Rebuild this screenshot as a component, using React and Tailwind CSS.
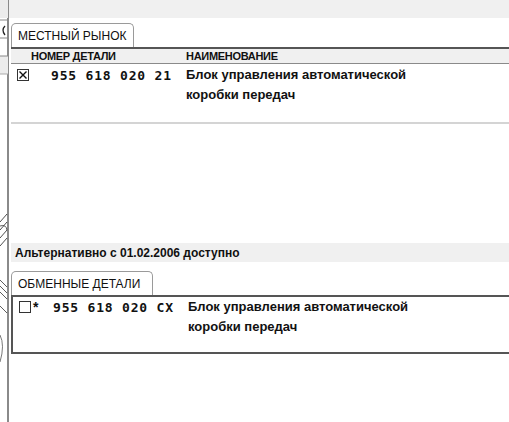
import React from 'react';

const font = { fontFamily: '"Liberation Sans", Arial, sans-serif' };

function Checkbox({ checked }) {
  return (
    <div className="w-[12px] h-[12px] border border-[#333] bg-white flex items-center justify-center">
      {checked && (
        <svg width="8" height="8" viewBox="0 0 8 8">
          <path d="M0.5 0.5 L7.5 7.5 M7.5 0.5 L0.5 7.5" stroke="#111" strokeWidth="1.4" />
        </svg>
      )}
    </div>
  );
}

function Tab({ label, w }) {
  return (
    <div
      className="h-[24px] border border-b-0 border-[#9a9a9a] rounded-t-[5px] bg-white flex items-center pl-[6px] text-[12px] text-[#111]"
      style={{ width: w }}
    >
      {label}
    </div>
  );
}

function PartRow({ checked, star, number }) {
  return (
    <div className="flex items-start h-[48px]">
      <div className="w-[37px] flex items-start pl-[6px] pt-[4px]">
        <Checkbox checked={checked} />
        {star && <span className="text-[14px] font-bold leading-[12px] ml-[2px]">*</span>}
      </div>
      <div
        className="w-[138px] pl-[3px] pt-[1px] text-[13px] font-bold tracking-[0.8px] leading-[19px] whitespace-pre"
        style={{ fontFamily: '"DejaVu Sans Mono", "Liberation Mono", monospace' }}
      >
        {number}
      </div>
      <div className="text-[13px] font-bold leading-[20px]">
        Блок управления автоматической<br />коробки передач
      </div>
    </div>
  );
}

export default function App() {
  return (
    <div className="w-[509px] h-[422px] bg-white flex overflow-hidden text-[#111]" style={font}>
      {/* background window edge */}
      <div className="w-[9px] relative border-r-2 border-[#8a8a8a] bg-white">
        <svg width="8" height="422" viewBox="0 0 8 422" className="absolute top-0 left-0">
          <rect x="0" y="0" width="8" height="18" fill="#ececec" />
          <line x1="0" y1="20" x2="8" y2="20" stroke="#888" />
          <path d="M5 26 Q1 30 5 35" stroke="#222" fill="none" strokeWidth="1.3" />
          <line x1="0" y1="38" x2="8" y2="38" stroke="#888" />
          <rect x="0" y="56" width="8" height="18" fill="#ececec" />
          <line x1="0" y1="56" x2="8" y2="56" stroke="#888" />
          <line x1="0" y1="74" x2="8" y2="74" stroke="#aaa" />
          <path d="M0 222 L7 214 M0 230 L7 222 M0 238 L7 230 M0 246 L7 238" stroke="#222" strokeWidth="0.8" />
          <path d="M0 226 Q6 224 7 230" stroke="#333" fill="none" strokeWidth="0.8" />
          <path d="M0 280 L7 287 M0 286 L7 293 M0 292 L7 299 M0 306 L7 313" stroke="#333" strokeWidth="0.8" />
          <path d="M0 335 Q5 345 0 362" stroke="#555" fill="none" strokeWidth="0.8" />
        </svg>
      </div>

      <div className="flex-1 flex flex-col">
        <div className="h-[18px] bg-[#f0f0f0]" />

        <div className="pl-[2px] pt-[5px] flex flex-col">
          <Tab label="МЕСТНЫЙ РЫНОК" w="123px" />
          <div className="h-[17px] bg-[#f0f0f0] border-t-2 border-b border-t-[#555] border-b-[#8a8a8a] flex items-center text-[11px] font-bold tracking-[-0.3px] text-[#111]">
            <span className="w-[175px] pl-[20px]">НОМЕР ДЕТАЛИ</span>
            <span>НАИМЕНОВАНИЕ</span>
          </div>
          <div className="pt-[1px]">
            <PartRow checked number={'955 618 020 21'} />
          </div>
          <div className="h-[11px] border-b-2 border-[#d4d4d4]" />
          <div className="h-[119px]" />
          <div className="h-[19px] bg-[#f0f0f0] flex items-center pl-[4px] text-[12px] font-bold">
            Альтернативно с 01.02.2006 доступно
          </div>
          <div className="h-[9px]" />
          <Tab label="ОБМЕННЫЕ ДЕТАЛИ" w="142px" />
          <div className="h-[59px] border-2 border-r-0 border-[#555] bg-white">
            <PartRow star number={'955 618 020 CX'} />
          </div>
        </div>
      </div>
    </div>
  );
}
